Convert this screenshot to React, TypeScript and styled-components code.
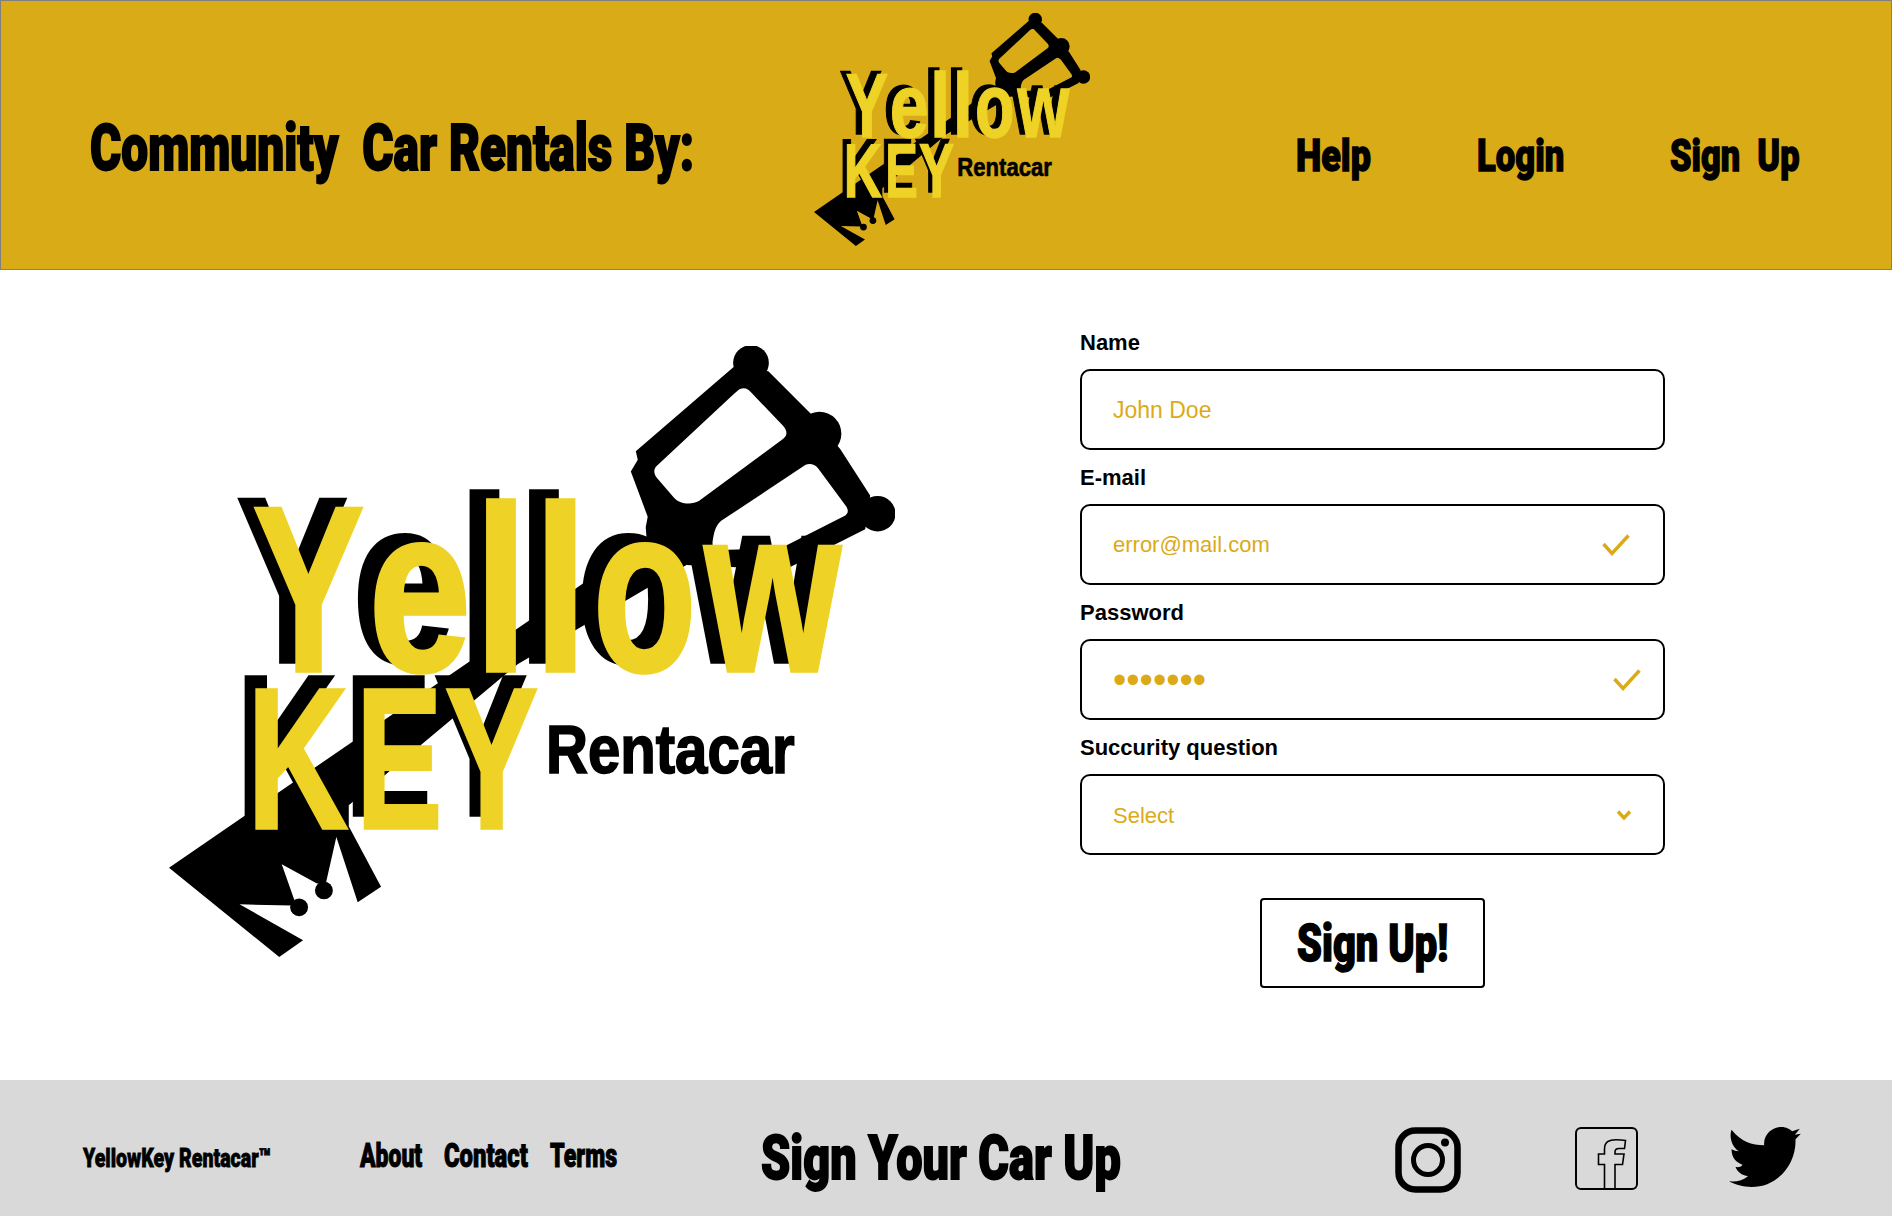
import React, { useLayoutEffect, useRef, useState } from "react";
import styled, { createGlobalStyle } from "styled-components";

const GOLD = "#d8ab17";
const INK = "#000";
const YELLOW = "#eed225";
const HEAVY = `Roboto, "Liberation Sans", Arial, sans-serif`;

const Global = createGlobalStyle`
  html, body { margin: 0; padding: 0; background: #fff; }
  body { font-family: "Liberation Sans", Arial, sans-serif; }
  * { box-sizing: border-box; }
`;

const Page = styled.div`
  width: 1892px;
  height: 1216px;
  display: flex;
  flex-direction: column;
  overflow: hidden;
`;

const Header = styled.header`
  height: 270px;
  flex: none;
  display: flex;
  align-items: flex-start;
  background: ${GOLD};
  border: 1px solid #808080;
  padding-left: 89px;
`;

const FitBox = styled.span<{ $w: number; $size: number }>`
  display: block;
  flex: none;
  width: ${(p) => p.$w}px;
  height: ${(p) => Math.round(p.$size * 1.1)}px;
  line-height: ${(p) => Math.round(p.$size * 1.1)}px;
  font-family: ${HEAVY};
  font-weight: 900;
  font-size: ${(p) => p.$size}px;
  color: ${INK};
  white-space: pre;
`;

const FitInner = styled.span`
  display: inline-block;
  transform-origin: left center;
  -webkit-text-stroke: 0.03em #000;
`;

function Fit({ w, size, children }: { w: number; size: number; children: React.ReactNode }) {
  const ref = useRef<HTMLSpanElement>(null);
  const [scale, setScale] = useState(1);
  useLayoutEffect(() => {
    if (ref.current) setScale(w / ref.current.offsetWidth);
  }, [w]);
  return (
    <FitBox $w={w} $size={size}>
      <FitInner ref={ref} style={{ transform: `scaleX(${scale})` }}>
        {children}
      </FitInner>
    </FitBox>
  );
}

const TitleSlot = styled.div`
  margin-top: 113px;
`;

const HeaderLogoSlot = styled.div`
  margin-left: 120px;
  margin-top: 12px;
`;

const Nav = styled.nav`
  display: flex;
  gap: 106px;
  margin-left: 206px;
  margin-top: 130px;
`;

const Main = styled.main`
  height: 810px;
  flex: none;
  display: flex;
  align-items: flex-start;
`;

const HeroSlot = styled.div`
  margin-left: 169px;
  margin-top: 76px;
`;

const Form = styled.form`
  width: 585px;
  margin-left: 185px;
  margin-top: 60px;
  display: flex;
  flex-direction: column;
  gap: 15px;
`;

const Field = styled.label`
  display: flex;
  flex-direction: column;
  gap: 14px;
`;

const LabelText = styled.span`
  font-size: 22px;
  line-height: 25px;
  font-weight: 700;
  color: #000;
`;

const InputBox = styled.div`
  height: 81px;
  border: 2px solid #000;
  border-radius: 10px;
  display: flex;
  align-items: center;
  padding-left: 31px;
  padding-top: 1px;
  background: #fff;
`;

const Input = styled.input<{ $size?: number; $spacing?: number }>`
  flex: 1;
  min-width: 0;
  border: 0;
  outline: 0;
  padding: 0;
  background: transparent;
  font-family: "Liberation Sans", Arial, sans-serif;
  font-size: ${(p) => p.$size ?? 22}px;
  letter-spacing: ${(p) => p.$spacing ?? 0}px;
  color: #dcaa17;
`;

const Select = styled.select`
  flex: 1;
  min-width: 0;
  border: 0;
  outline: 0;
  padding: 0;
  appearance: none;
  background: transparent;
  font-family: "Liberation Sans", Arial, sans-serif;
  font-size: 22px;
  color: #dcaa17;
`;

const FieldIcon = styled.svg<{ $right: number }>`
  flex: none;
  margin-right: ${(p) => p.$right}px;
  margin-left: 8px;
`;

const Submit = styled.button`
  align-self: center;
  margin-top: 28px;
  width: 225px;
  height: 90px;
  padding: 0;
  display: flex;
  align-items: center;
  justify-content: center;
  background: #fff;
  border: 2px solid #000;
  border-radius: 4px;
`;

const Footer = styled.footer`
  height: 136px;
  flex: none;
  display: flex;
  align-items: center;
  background: #d9d9d9;
  padding-left: 83px;
`;

const FooterLinks = styled.nav`
  display: flex;
  gap: 22px;
  margin-left: 89px;
  margin-top: 14px;
`;

const BrandSlot = styled.div`
  margin-top: 21px;
`;

const CtaSlot = styled.div`
  margin-left: 144px;
  margin-top: 20px;
`;

const Socials = styled.div`
  display: flex;
  align-items: flex-start;
  margin-left: 274px;
  margin-top: 24px;
  color: #000;
`;

const SocialLink = styled.a<{ $gap?: number }>`
  display: flex;
  margin-left: ${(p) => p.$gap ?? 0}px;
  color: #000;
`;

const LOGO_FONT = `"Liberation Sans", Arial, sans-serif`;

// side bearing and ink share of each glyph's advance, to make the ink fill the wanted box
const GLYPH: Record<string, [number, number]> = {
  Y: [0.01, 0.98],
  e: [0.06, 0.87],
  l: [0.25, 0.5],
  o: [0.06, 0.88],
  w: [0.01, 0.98],
  K: [0.1, 0.88],
  E: [0.11, 0.82],
};

function Letters({ items, y, size, fill, dx = 0, dy = 0 }: {
  items: [string, number, number][]; y: number; size: number; fill: string; dx?: number; dy?: number;
}) {
  return (
    <g fontFamily={LOGO_FONT} fontWeight={700} fontSize={size} fill={fill} stroke={fill} strokeWidth={8}>
      {items.map(([ch, x, w]) => {
        const [lsb, ink] = GLYPH[ch];
        const adv = (w - 8) / ink;
        return (
          <text key={ch + x} x={x + 4 + dx - lsb * adv} y={y + dy - 4} textLength={adv} lengthAdjust="spacingAndGlyphs">{ch}</text>
        );
      })}
    </g>
  );
}

const YELLOW_LETTERS: [string, number, number][] = [
  ["Y", 225, 228], ["e", 468, 188], ["l", 695, 63], ["l", 815, 63], ["o", 920, 192], ["w", 1135, 277],
];
const KEY_LETTERS: [string, number, number][] = [
  ["K", 232, 186], ["E", 450, 150], ["Y", 612, 191],
];

function Logo({ width, height }: { width: number; height: number }) {
  return (
    <svg width={width} height={height} viewBox="58 60 1462 1450" preserveAspectRatio="none" role="img" aria-label="YellowKey Rentacar logo">
      <path
        fillRule="evenodd"
        fill="#000"
        d="M1195 110 L1265 120 L1350 220 L1410 305 L1470 415 L1460 495 L1300 590 L1100 580 L760 815 L420 1150 L420 1200 L485 1343 L438 1380 L395 1225 L373 1340 L355 1335 L285 1290 L312 1380 L305 1388 L200 1385 L328 1470 L280 1510 L58 1298 L1020 520 L1018 490 L1022 465 L988 358 L1002 330 L998 310 Z
           M1215 160 C1205 160 1200 170 1190 180 L1040 345 C1032 355 1035 365 1042 375 L1075 420 C1085 435 1110 438 1125 428 L1295 280 C1305 270 1302 260 1295 250 L1230 170 C1226 164 1222 160 1215 160 Z
           M1340 342 L1170 475 C1155 490 1155 510 1150 545 L1290 540 L1420 462 C1428 456 1425 445 1420 438 L1365 350 C1358 340 1348 338 1340 342 Z"
      />
      <ellipse cx={1230} cy={100} rx={36} ry={42} />
      <ellipse cx={1368} cy={268} rx={44} ry={52} />
      <ellipse cx={1485} cy={458} rx={36} ry={42} />
      <ellipse cx={370} cy={1352} rx={18} ry={21} />
      <ellipse cx={320} cy={1392} rx={18} ry={21} />
      <Letters items={YELLOW_LETTERS} y={835} size={561} fill="#000" dx={-33} dy={-20} />
      <Letters items={KEY_LETTERS} y={1208} size={476} fill="#000" dx={-22} dy={-30} />
      <Letters items={YELLOW_LETTERS} y={835} size={561} fill={YELLOW} />
      <Letters items={KEY_LETTERS} y={1208} size={476} fill={YELLOW} />
      <text x={817} y={1074} fontFamily={LOGO_FONT} fontWeight={700} fontSize={163} textLength={501} lengthAdjust="spacingAndGlyphs" fill="#000" stroke="#000" strokeWidth={4}>Rentacar</text>
    </svg>
  );
}

function Check({ right }: { right: number }) {
  return (
    <FieldIcon $right={right} width="28" height="22" viewBox="0 0 28 22" fill="none" stroke="#dcaa17" strokeWidth="3.4">
      <path d="M1.5 10 L10 19.5 L26.5 1.5" />
    </FieldIcon>
  );
}

export default function App() {
  return (
    <Page>
      <Global />
      <Header>
        <TitleSlot>
          <Fit w={604} size={64}>{"Community  Car Rentals By:"}</Fit>
        </TitleSlot>
        <HeaderLogoSlot>
          <Logo width={276} height={233} />
        </HeaderLogoSlot>
        <Nav>
          <Fit w={75} size={45}>Help</Fit>
          <Fit w={87} size={45}>Login</Fit>
          <Fit w={130} size={45}>{"Sign  Up"}</Fit>
        </Nav>
      </Header>

      <Main>
        <HeroSlot>
          <Logo width={726} height={611} />
        </HeroSlot>
        <Form onSubmit={(e) => e.preventDefault()}>
          <Field>
            <LabelText>Name</LabelText>
            <InputBox>
              <Input $size={23} defaultValue="John Doe" />
            </InputBox>
          </Field>
          <Field>
            <LabelText>E-mail</LabelText>
            <InputBox>
              <Input defaultValue="error@mail.com" />
              <Check right={33} />
            </InputBox>
          </Field>
          <Field>
            <LabelText>Password</LabelText>
            <InputBox>
              <Input type="password" $size={38} defaultValue="1234567" />
              <Check right={22} />
            </InputBox>
          </Field>
          <Field>
            <LabelText>Succurity question</LabelText>
            <InputBox>
              <Select defaultValue="select">
                <option value="select">Select</option>
              </Select>
              <FieldIcon $right={31} width="16" height="12" viewBox="0 0 16 12" fill="none" stroke="#dcaa17" strokeWidth="3.4">
                <path d="M2 2.5 L8 9 L14 2.5" />
              </FieldIcon>
            </InputBox>
          </Field>
          <Submit type="submit">
            <Fit w={151} size={52}>Sign Up!</Fit>
          </Submit>
        </Form>
      </Main>

      <Footer>
        <BrandSlot>
          <Fit w={188} size={26}>YellowKey Rentacar™</Fit>
        </BrandSlot>
        <FooterLinks>
          <Fit w={62} size={34}>About</Fit>
          <Fit w={84} size={34}>Contact</Fit>
          <Fit w={67} size={34}>Terms</Fit>
        </FooterLinks>
        <CtaSlot>
          <Fit w={360} size={61}>Sign Your Car Up</Fit>
        </CtaSlot>
        <Socials>
          <SocialLink aria-label="Instagram">
            <svg width="66" height="66" viewBox="0 0 66 66" fill="none" stroke="#000">
              <rect x="3.5" y="3.5" width="59" height="59" rx="17" strokeWidth="6.5" />
              <circle cx="33" cy="33" r="14.5" strokeWidth="5" />
              <circle cx="50" cy="15.5" r="4" fill="#000" stroke="none" />
            </svg>
          </SocialLink>
          <SocialLink aria-label="Facebook" $gap={114}>
            <svg width="63" height="63" viewBox="0 0 63 63" fill="none" stroke="#000">
              <rect x="1" y="1" width="61" height="61" rx="5" strokeWidth="2" />
              <path strokeWidth="1.6" d="M29.5 61 V37.5 H23.5 V27 H29.5 V22 C29.5 15 34 12.7 41 12.7 Q46 12.7 50.5 13.5 L49.5 21.5 H44 C41 21.5 40 23 40 25 V27 H49 L47.5 37.5 H40 V61" />
            </svg>
          </SocialLink>
          <SocialLink aria-label="Twitter" $gap={91}>
            <svg width="72" height="60" viewBox="1103 105 215 180" fill="#000">
              <path d="M1110 113 C1140 150 1170 158 1208 160 C1205 125 1235 105 1260 105 C1275 105 1285 112 1292 118 L1315 110 L1300 128 L1318 125 L1302 142 C1305 215 1250 285 1170 285 C1145 285 1120 278 1103 268 C1125 270 1145 265 1160 252 C1140 250 1128 240 1122 225 C1130 226 1138 226 1143 218 C1125 212 1110 198 1110 172 C1117 176 1125 178 1132 178 C1112 165 1102 135 1110 113 Z" />
            </svg>
          </SocialLink>
        </Socials>
      </Footer>
    </Page>
  );
}
